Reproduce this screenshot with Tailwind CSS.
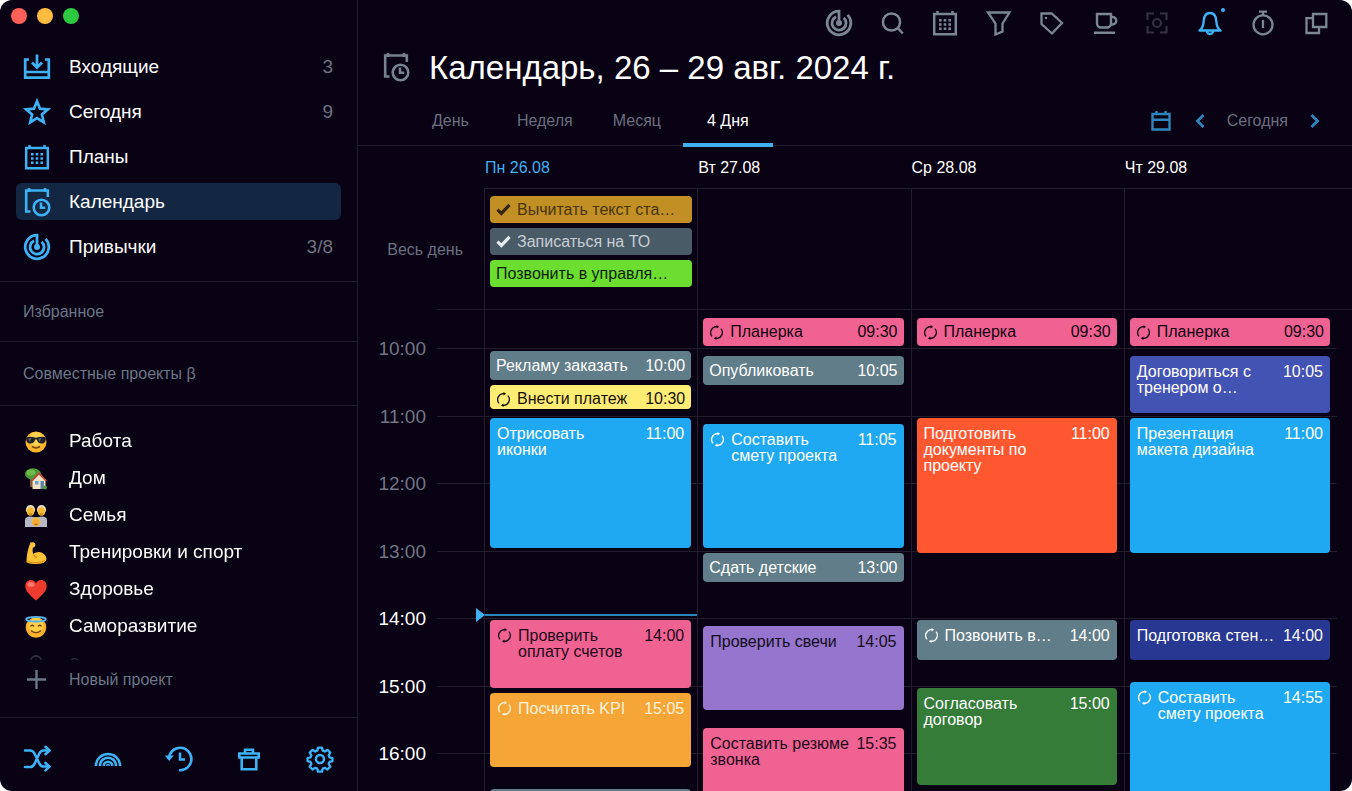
<!DOCTYPE html>
<html lang="ru">
<head>
<meta charset="utf-8">
<meta name="viewport" content="width=device-width, initial-scale=1">
<title>Календарь</title>
<script src="https://cdn.jsdelivr.net/npm/@tailwindcss/browser@4"></script>
</head>
<body class="bg-white font-['Liberation_Sans',Arial,sans-serif]">

<!-- Shared icon shapes -->
<svg class="hidden" aria-hidden="true">
  <symbol id="target" viewBox="0 0 28 28"><g fill="none" stroke="currentColor" stroke-width="2.8"><path d="M14 14V2.200A11.800 11.800 0 1 0 22.600 5.900"/><path d="M11 7.800A7 7 0 1 0 18.600 8.800"/></g><circle cx="14" cy="14" r="3" fill="currentColor"/></symbol>
  <symbol id="plans" viewBox="0 0 28 28"><g fill="none" stroke="currentColor" stroke-width="2.500"><path d="M3.200 5h21.600v20.200H3.200z"/><path d="M6.500 2v4M21.500 2v4"/></g><path fill="currentColor" d="M8 10h2.600v2.600H8zM12.700 10h2.600v2.600h-2.600zM17.400 10H20v2.600h-2.600zM8 14.200h2.600v2.600H8zM12.700 14.200h2.600v2.600h-2.600zM17.400 14.200H20v2.600h-2.600zM8 18.400h2.600V21H8zM12.700 18.400h2.600V21h-2.600zM17.400 18.400H20V21h-2.600z"/></symbol>
  <symbol id="calclock" viewBox="0 0 28 30"><g fill="none" stroke="currentColor" stroke-width="2.600"><path d="M7.500 24.500H3.200V3.500h21.600v6.500"/><path d="M6 1v4M22 1v4"/><circle cx="18.500" cy="20.500" r="7.800"/><path d="M18 15.500v5.300h4.300"/></g></symbol>
  <symbol id="repeat" viewBox="0 0 16 16"><g fill="none" stroke="currentColor" stroke-width="1.400"><path d="M3.300 12.200A6.300 6.300 0 0 1 8.600 1.800"/><path d="M12.700 3.800A6.300 6.300 0 0 1 7.400 14.200"/></g><path fill="currentColor" d="M8 0l2.800 1.900L8 3.800zM8 12.200l-2.800 1.900L8 16z"/></symbol>
  <symbol id="check" viewBox="0 0 16 14"><path fill="none" stroke="currentColor" stroke-width="3.400" d="M1.500 7.200l4.200 4L14.500 2"/></symbol>
</svg>

<div class="flex h-screen w-full overflow-hidden rounded-[12px] bg-[#090114] text-white">

  <!-- Sidebar -->
  <aside class="flex w-[358px] shrink-0 flex-col border-r border-[#221c2d]">
    <div class="flex h-[48px] shrink-0 items-start gap-[10px] pt-2 pl-[11px]">
      <button aria-label="Закрыть" class="size-4 rounded-full bg-[#fe5f57]"></button>
      <button aria-label="Свернуть" class="size-4 rounded-full bg-[#febb40]"></button>
      <button aria-label="Развернуть" class="size-4 rounded-full bg-[#2bc840]"></button>
    </div>

    <nav class="mx-4 flex shrink-0 flex-col gap-2 pb-4 text-[19px] [&_span]:pt-[2px]">
      <a href="#" class="flex h-[37px] items-center rounded-md px-[7px]">
        <svg class="mr-[18px] size-7 text-[#3db2f5]" viewBox="0 0 28 28" fill="none" stroke="currentColor" stroke-width="2.700"><path d="M6 6.500H2.200v18.200h23.600V6.500H22M2.200 19h23.600M14 1.500V14M9 9.500l5 5 5-5"/></svg>
        <span class="flex-1">Входящие</span><span class="pr-px text-[#6f7280]">3</span>
      </a>
      <a href="#" class="flex h-[37px] items-center rounded-md px-[7px]">
        <svg class="mr-[18px] size-7 text-[#3db2f5]" viewBox="0 0 28 28" fill="none" stroke="currentColor" stroke-width="2.700"><path d="M14 3.300l3 7.400 8 .6-6.100 5.200 1.900 7.800-6.800-4.200-6.800 4.200 1.900-7.800L3 11.300l8-.6z"/></svg>
        <span class="flex-1">Сегодня</span><span class="pr-px text-[#6f7280]">9</span>
      </a>
      <a href="#" class="flex h-[37px] items-center rounded-md px-[7px]">
        <svg class="mr-[18px] size-7 text-[#3db2f5]"><use href="#plans"/></svg>
        <span class="flex-1">Планы</span>
      </a>
      <a href="#" aria-current="page" class="flex h-[37px] items-center rounded-md bg-[#132642] px-[7px]">
        <svg class="mr-[18px] h-[30px] w-7 text-[#3db2f5]"><use href="#calclock"/></svg>
        <span class="flex-1">Календарь</span>
      </a>
      <a href="#" class="flex h-[37px] items-center rounded-md px-[7px]">
        <svg class="mr-[18px] size-7 text-[#3db2f5]"><use href="#target"/></svg>
        <span class="flex-1">Привычки</span><span class="pr-px text-[#6f7280]">3/8</span>
      </a>
    </nav>

    <h2 class="flex h-[60px] shrink-0 items-center border-t border-[#221c2d] pl-[23px] text-base text-[#6b7786]">Избранное</h2>
    <h2 class="flex h-[65px] shrink-0 items-center border-y border-[#221c2d] pl-[23px] text-base text-[#6b7786]">Совместные проекты β</h2>

    <div class="min-h-0 flex-1 overflow-hidden pt-[17px] text-[19px] [mask-image:linear-gradient(to_top,#0005,#000_20px)]">
      <a href="#" class="flex h-[37px] items-center pl-[25px]">
        <svg class="mr-[22px] size-[22px]" viewBox="0 0 22 22"><circle cx="11" cy="11" r="10.500" fill="#fcb72b"/><circle cx="11" cy="8" r="7" fill="#ffd34d"/><path d="M1 6.500c3-1 6-.8 10 .2 4-1 7-1.200 10-.2-.1 4-1.400 6-4.400 6-2.800 0-4.200-1.600-4.800-4h-1.600c-.6 2.400-2 4-4.800 4-3 0-4.300-2-4.400-6z" fill="#20222a"/><path d="M3.500 7.500l3-.5-2 4zM13.500 7.500l3-.5-2 4z" fill="#5f6670"/><path d="M7 15.300c2.500 2 5.500 2 8 0" fill="none" stroke="#70401a" stroke-width="1.500"/></svg>
        Работа</a>
      <a href="#" class="flex h-[37px] items-center pl-[25px]">
        <svg class="mr-[22px] size-[22px]" viewBox="0 0 22 22"><path d="M5 10h3v9H5z" fill="#8b5a34"/><ellipse cx="8" cy="6" rx="8" ry="5.800" fill="#4c9a35"/><ellipse cx="6" cy="4.500" rx="4.500" ry="3" fill="#6fb84a"/><path d="M7.500 11.500l6.500-7 6.500 7V21h-13z" fill="#f3e2c4"/><path d="M6 12.500l8-8.500 8 8.500-1.500.8L14 6.800l-6.500 6.500z" fill="#b8483c"/><path d="M10 13h3.500v3.500H10z" fill="#66a7d8"/><path d="M15.500 13H19v8h-3.500z" fill="#5b86b0"/><circle cx="20" cy="19.500" r="2" fill="#4c9a35"/></svg>
        Дом</a>
      <a href="#" class="flex h-[37px] items-center pl-[25px]">
        <svg class="mr-[22px] size-[22px]" viewBox="0 0 22 22"><path d="M0 22v-7c0-2 2-3.500 5-3.500s5.500 1 6 3c.5-2 3-3 6-3s5 1.500 5 3.500v7z" fill="#b5b8c4"/><ellipse cx="5.500" cy="4.700" rx="4.600" ry="4.700" fill="#e6dcc8"/><ellipse cx="16.500" cy="4.700" rx="4.600" ry="4.700" fill="#e6dcc8"/><ellipse cx="5.500" cy="6.500" rx="3.600" ry="4.300" fill="#f9b92e"/><ellipse cx="16.500" cy="6.500" rx="3.600" ry="4.300" fill="#f9b92e"/><path d="M4 9h3M15 9h3" stroke="#9a5b18" stroke-width=".8"/><circle cx="11" cy="16.500" r="4.600" fill="#e6c060"/><ellipse cx="11" cy="17.600" rx="3.600" ry="3.800" fill="#f9a92e"/><path d="M9.500 19.500h3" stroke="#8a4b10" stroke-width=".8"/></svg>
        Семья</a>
      <a href="#" class="flex h-[37px] items-center pl-[25px]">
        <svg class="mr-[22px] size-[22px]" viewBox="0 0 22 22"><path d="M5.500.5C7.500-.3 10 .3 10.300 2c.3 1.800-.6 3.200-2.300 3.700-.6 2-.6 4 .3 6.300 2.700-2 6.500-2.600 9.200-1 3.300 1.900 4.700 5.300 3.500 7.700-1.800 3-8 3.500-12 3.200-4-.2-7-.9-7.600-1.900C1.500 14 3 6 5.500.5z" fill="#fcc436"/><path d="M8.500 12.500c.8 1.800 2 2.800 3.600 3M2 19c5 2.500 14 2 18.500-.5" fill="none" stroke="#e08a16" stroke-width="1.300"/></svg>
        Тренировки и спорт</a>
      <a href="#" class="flex h-[37px] items-center pl-[25px]">
        <svg class="mr-[22px] size-[22px]" viewBox="0 0 22 22"><path d="M11 21.500C5 16.500.3 12 .3 7 .3 3.500 2.800 1 5.800 1 8 1 10 2.200 11 4.200 12 2.200 14 1 16.200 1c3 0 5.500 2.500 5.500 6 0 5-4.700 9.500-10.700 14.500z" fill="#ee3b2f"/><ellipse cx="6" cy="5.500" rx="3.500" ry="2.500" fill="#f9776c"/></svg>
        Здоровье</a>
      <a href="#" class="flex h-[37px] items-center pl-[25px]">
        <svg class="mr-[22px] size-[22px]" viewBox="0 0 22 22"><circle cx="11" cy="11.500" r="10.300" fill="#fcb32b"/><circle cx="11" cy="9.500" r="7.500" fill="#ffcf47"/><ellipse cx="11" cy="3.200" rx="9.800" ry="2.300" fill="none" stroke="#55b4ee" stroke-width="1.800"/><path d="M5.500 10.500c.8-1.600 2.600-1.600 3.400 0M13.100 10.500c.8-1.600 2.600-1.600 3.400 0M6 14.500c3 2.800 7 2.800 10 0" fill="none" stroke="#70401a" stroke-width="1.400"/></svg>
        Саморазвитие</a>
      <a href="#" class="flex h-[41px] items-center pl-[25px] text-[#6a6670]">
        <svg class="mr-[22px] size-[22px]" viewBox="0 0 22 22" fill="none" stroke="#6a6670" stroke-width="1.800"><path d="M5.500 12V6.500a5.500 5.500 0 0 1 11 0V12"/><circle cx="11" cy="7" r="1.500"/></svg>
        З</a>
    </div>

    <button class="flex h-[57px] shrink-0 items-start pt-[10px] pl-[27px] text-left text-base leading-5 text-[#6b7786]">
      <svg class="mr-[23px] size-[19px]" viewBox="0 0 19 19" fill="none" stroke="currentColor" stroke-width="2.400"><path d="M9.500 0v19M0 9.500h19"/></svg>
      Новый проект</button>

    <div class="flex h-[74px] shrink-0 items-center justify-between border-t border-[#221c2d] pt-[9px] pr-[23px] pb-[1px] pl-[23px] text-[#3db2f5]">
      <button aria-label="Перемешать"><svg class="size-7" viewBox="0 0 28 28" fill="none" stroke="currentColor" stroke-width="2.600" stroke-linecap="round"><path d="M2 5.500h5.500c2 0 3 1.300 4 3l4.800 10c1 1.700 2 3 4 3H25M2 22h5.500c2 0 3-1.300 4-3l4.800-10.500c1-1.700 2-3 4-3H25"/><path d="M22.500 1.800l4 3.700-4 3.700M22.500 18l4 3.700-4 3.700"/></svg></button>
      <button aria-label="Радуга"><svg class="size-7" viewBox="0 0 28 28" fill="none" stroke="currentColor" stroke-width="2.600"><path d="M2 21v-.5a12 11.500 0 0 1 24 0v.5M6 21v-.5a8 7.700 0 0 1 16 0v.5M9.800 21v-.3a4.200 4 0 0 1 8.400 0v.3"/><path d="M12.800 21a1.200 1.500 0 0 1 2.400 0" stroke-width="1.500"/></svg></button>
      <button aria-label="История"><svg class="size-7" viewBox="0 0 28 28" fill="none" stroke="currentColor" stroke-width="2.600"><path d="M4 13.500A11.200 11.200 0 1 1 15 25.200" stroke-linecap="round"/><path d="M15 7.500v7h5"/><path d="M-.2 10.500h9L4.200 16z" fill="currentColor" stroke="none"/></svg></button>
      <button aria-label="Корзина"><svg class="size-7" viewBox="0 0 28 28" fill="none" stroke="currentColor" stroke-width="2.600"><path d="M4.300 8.500h19.400v4H4.300zM6.700 12.500v11.800h14.600V12.500M10 8.500V4.800h8v3.700"/></svg></button>
      <button aria-label="Настройки"><svg class="size-7" viewBox="0 0 28 28" fill="none" stroke="currentColor" stroke-width="2.500" stroke-linejoin="round"><path d="M11.900 1.900h4.200l.8 3.200 2.200.9 2.800-1.700 3 3-1.700 2.800.9 2.200 3.100.8v3.200l-3.100.8-.9 2.200 1.700 2.800-3 3-2.800-1.700-2.200.9-.8 3.100h-4.200l-.8-3.100-2.200-.9-2.800 1.700-3-3 1.700-2.800-.9-2.200-3.100-.8v-3.200l3.100-.8.9-2.200-1.700-2.800 3-3L8.900 6l2.200-.9z" transform="translate(.8 .8) scale(.943)"/><circle cx="14" cy="14" r="4"/></svg></button>
    </div>
  </aside>

  <!-- Main area -->
  <main class="flex min-w-0 flex-1 flex-col">
    <div class="flex h-[46px] shrink-0 items-center justify-end gap-[25px] pr-[22px] text-[#7b8794]">
      <button aria-label="Привычки"><svg class="size-7"><use href="#target"/></svg></button>
      <button aria-label="Поиск"><svg class="size-7" viewBox="0 0 28 28" fill="none" stroke="currentColor" stroke-width="2.500"><circle cx="13.500" cy="13" r="8.600"/><path d="M19.800 19.200l5 5.300"/></svg></button>
      <button aria-label="Планы"><svg class="size-7"><use href="#plans"/></svg></button>
      <button aria-label="Фильтр"><svg class="size-7" viewBox="0 0 28 28" fill="none" stroke="currentColor" stroke-width="2.300"><path d="M4 3.500h21.500l-7 11v8l-7 3v-11z"/></svg></button>
      <button aria-label="Метки"><svg class="size-7" viewBox="0 0 28 28" fill="none" stroke="currentColor" stroke-width="2.300"><path d="M4.500 4.500h10.200L25 14 15 24.500 4.500 15z"/><circle cx="9" cy="9" r="1.300" fill="currentColor" stroke="none"/></svg></button>
      <button aria-label="Перерыв"><svg class="size-7" viewBox="0 0 28 28" fill="none" stroke="currentColor" stroke-width="2.400"><path d="M7 5h14v9.500a4 4 0 0 1-4 4h-6a4 4 0 0 1-4-4zM21 8h1.500a2.500 2.500 0 0 1 0 7.500H21M4 23.700h21"/></svg></button>
      <button aria-label="Фокус" class="text-[#34303e]"><svg class="size-7" viewBox="0 0 28 28" fill="none" stroke="currentColor" stroke-width="2.200"><path d="M4.500 11V4.500H11M17 4.500h6.500V11M23.500 17v6.500H17M11 23.500H4.500V17"/><circle cx="14" cy="14" r="4"/></svg></button>
      <button aria-label="Уведомления" class="relative text-[#3db2f5]"><svg class="size-7" viewBox="0 0 28 28" fill="none" stroke="currentColor" stroke-width="2.400" stroke-linejoin="round"><path d="M3.500 21.500c3.200-2 3.900-5 4.200-9.500C8 7 10.200 4 14 4s6 3 6.300 8c.3 4.500 1 7.500 4.200 9.500z"/><path d="M11 22c.3 4 5.700 4 6 0"/></svg><span class="absolute -top-px -right-px size-1 rounded-full bg-[#3db2f5]"></span></button>
      <button aria-label="Таймер"><svg class="size-7" viewBox="0 0 28 28" fill="none" stroke="currentColor" stroke-width="2.300"><circle cx="14" cy="15.800" r="9.500"/><path d="M10 2.700h8M14 2.700v4M14 11v8"/></svg></button>
      <button aria-label="Окна"><svg class="size-7" viewBox="0 0 28 28" fill="none" stroke="currentColor" stroke-width="2.300"><path d="M11 5h13.300v13H11z"/><path d="M11 9.200H4.500V24H17v-6"/></svg></button>
    </div>

    <div class="flex h-[42px] shrink-0 items-center gap-[19px] pl-6">
      <svg class="h-[30px] w-7 text-[#76828f]"><use href="#calclock"/></svg>
      <h1 class="text-[33px] leading-none whitespace-nowrap">Календарь, 26 – 29 авг. 2024 г.</h1>
    </div>

    <div class="flex h-[58px] shrink-0 items-stretch border-b border-[#221c2d] pr-[32px] pl-[50px] text-base text-[#6b7080]">
      <button class="px-6 pt-2">День</button>
      <button class="pt-2 pr-5 pl-6">Неделя</button>
      <button class="px-5 pt-2">Месяц</button>
      <button aria-pressed="true" class="relative ml-[2px] px-6 pt-2 text-white after:absolute after:inset-x-0 after:-bottom-[2px] after:h-1 after:bg-[#3db2f5]">4 Дня</button>
      <div class="ml-auto flex items-center pt-2">
        <button aria-label="Выбрать дату" class="text-[#2f86bd]"><svg class="size-5" viewBox="0 0 20 20" fill="none" stroke="currentColor" stroke-width="2.400"><path d="M1.500 3h17v15.500h-17zM1.500 8.700h17M5.500 0v3M14.500 0v3"/></svg></button>
        <button aria-label="Назад" class="ml-6 text-[#2f86bd]"><svg class="h-[14px] w-[10px]" viewBox="0 0 10 14" fill="none" stroke="currentColor" stroke-width="2.800"><path d="M8.500 1L2.500 7l6 6"/></svg></button>
        <button class="mx-[22px]">Сегодня</button>
        <button aria-label="Вперёд" class="text-[#2f86bd]"><svg class="h-[14px] w-[10px]" viewBox="0 0 10 14" fill="none" stroke="currentColor" stroke-width="2.800"><path d="M1.500 1l6 6-6 6"/></svg></button>
      </div>
    </div>

    <!-- Day names -->
    <div class="grid h-[42px] shrink-0 grid-cols-4 items-center pt-[2px] pr-[14px] pl-[127px] text-base whitespace-nowrap">
      <div class="text-[#3db2f5]">Пн 26.08</div>
      <div>Вт 27.08</div>
      <div>Ср 28.08</div>
      <div>Чт 29.08</div>
    </div>

    <!-- All-day tasks -->
    <div class="flex h-[121px] shrink-0">
      <div class="flex w-[126px] shrink-0 items-center justify-end pt-[2px] pr-[21px] text-base text-[#6b7080]">Весь день</div>
      <div class="grid flex-1 grid-cols-4 border-t border-[#221c2d] pr-[15px]">
        <div class="flex min-w-0 flex-col gap-[5px] border-l border-[#221c2d] pt-[7px] pr-[5px] pl-[5px] text-base">
          <button class="flex h-[27px] items-center rounded bg-[#c18f24] px-[6px] whitespace-nowrap text-[#4a340c]"><svg class="mr-[6px] h-[13px] w-[15px] text-[#33240a]"><use href="#check"/></svg>Вычитать текст ста…</button>
          <button class="flex h-[27px] items-center rounded bg-[#4a5b68] px-[6px] whitespace-nowrap text-[#c6ced6]"><svg class="mr-[6px] h-[13px] w-[15px] text-[#e4eaf0]"><use href="#check"/></svg>Записаться на ТО</button>
          <button class="flex h-[27px] items-center rounded bg-[#6bde2f] px-[6px] whitespace-nowrap text-[#0d1c0a]">Позвонить в управля…</button>
        </div>
        <div class="border-l border-[#221c2d]"></div>
        <div class="border-l border-[#221c2d]"></div>
        <div class="border-l border-[#221c2d]"></div>
      </div>
    </div>

    <!-- Hours and timed tasks share one grid cell -->
    <div class="grid min-h-0 flex-1 grid-cols-1 grid-rows-1 overflow-hidden">
      <div class="col-start-1 row-start-1 min-h-0 overflow-hidden text-[19px] text-[#717684]">
        <div class="ml-[79px] h-px bg-[#221c2d]"></div>
        <div class="flex flex-col pt-[5px] pr-[15px] [&_span]:first:pt-[2px]">
          <div class="flex h-[67px] items-center gap-[11px]"><span class="w-[68px] pt-[2px] text-right">10:00</span><span class="h-px flex-1 bg-[#221c2d]"></span></div>
          <div class="flex h-[68px] items-center gap-[11px]"><span class="w-[68px] pt-[2px] text-right">11:00</span><span class="h-px flex-1 bg-[#221c2d]"></span></div>
          <div class="flex h-[67px] items-center gap-[11px]"><span class="w-[68px] pt-[2px] text-right">12:00</span><span class="h-px flex-1 bg-[#221c2d]"></span></div>
          <div class="flex h-[68px] items-center gap-[11px]"><span class="w-[68px] pt-[2px] text-right">13:00</span><span class="h-px flex-1 bg-[#221c2d]"></span></div>
          <div class="flex h-[67px] items-center gap-[11px]"><span class="w-[68px] pt-[2px] text-right text-white">14:00</span><span class="h-px flex-1 bg-[#221c2d]"></span></div>
          <div class="flex h-[68px] items-center gap-[11px]"><span class="w-[68px] pt-[2px] text-right text-white">15:00</span><span class="h-px flex-1 bg-[#221c2d]"></span></div>
          <div class="flex h-[67px] items-center gap-[11px]"><span class="w-[68px] pt-[2px] text-right text-white">16:00</span><span class="h-px flex-1 bg-[#221c2d]"></span></div>
        </div>
      </div>

      <div class="col-start-1 row-start-1 grid min-h-0 grid-cols-4 overflow-hidden pr-[15px] pl-[126px] text-base leading-4">
        <!-- Monday -->
        <div class="relative flex min-w-0 flex-col border-l border-[#221c2d] pt-[42px] pr-[6px] pl-[5px]">
          <div class="absolute top-[299px] right-0 -left-[9px] flex items-center">
            <span class="h-[14px] w-[9px] bg-[#3db2f5] [clip-path:polygon(0_0,100%_50%,0_100%)]"></span>
            <span class="h-[2px] flex-1 bg-[#2a86bd]"></span>
          </div>
          <button class="flex h-[29px] shrink-0 items-center justify-between rounded bg-[#607d89] px-[6px] whitespace-nowrap"><span>Рекламу заказать</span><span>10:00</span></button>
          <button class="mt-[5px] flex h-[24px] shrink-0 items-center rounded bg-[#ffec72] px-[6px] pt-[4px] whitespace-nowrap text-[#15120a]"><svg class="mr-[6px] size-[15px]"><use href="#repeat"/></svg><span class="flex-1 text-left">Внести платеж</span><span>10:30</span></button>
          <button class="mt-[9px] flex h-[130px] shrink-0 items-start justify-between rounded bg-[#20a9f3] px-[7px] pt-[8px] text-left"><span>Отрисовать<br>иконки</span><span>11:00</span></button>
          <button class="mt-[72px] flex h-[68px] shrink-0 items-start rounded bg-[#f06292] px-[7px] pt-[8px] text-left text-[#1c0a18]"><svg class="mr-[6px] size-[15px]"><use href="#repeat"/></svg><span class="flex-1 whitespace-nowrap">Проверить<br>оплату счетов</span><span>14:00</span></button>
          <button class="mt-[5px] flex h-[74px] shrink-0 items-start rounded bg-[#f6a636] px-[7px] pt-[8px] text-left text-[#fff1dc]"><svg class="mr-[6px] size-[15px]"><use href="#repeat"/></svg><span class="flex-1 whitespace-nowrap">Посчитать KPI</span><span>15:05</span></button>
          <div class="mt-[22px] h-[29px] shrink-0 rounded bg-[#607d89]"></div>
        </div>
        <!-- Tuesday -->
        <div class="flex min-w-0 flex-col border-l border-[#221c2d] pt-[9px] pr-[7px] pl-[5px]">
          <button class="flex h-[28px] shrink-0 items-center rounded bg-[#f06292] px-[6px] whitespace-nowrap text-[#12020f]"><svg class="mr-[6px] size-[15px]"><use href="#repeat"/></svg><span class="flex-1 text-left">Планерка</span><span>09:30</span></button>
          <button class="mt-[10px] flex h-[29px] shrink-0 items-center justify-between rounded bg-[#607d89] px-[6px] whitespace-nowrap"><span>Опубликовать</span><span>10:05</span></button>
          <button class="mt-[39px] flex h-[124px] shrink-0 items-start rounded bg-[#20a9f3] px-[7px] pt-[8px] text-left"><svg class="mr-[6px] size-[15px]"><use href="#repeat"/></svg><span class="flex-1 whitespace-nowrap">Составить<br>смету проекта</span><span>11:05</span></button>
          <button class="mt-[5px] flex h-[29px] shrink-0 items-center justify-between rounded bg-[#607d89] px-[6px] whitespace-nowrap"><span>Сдать детские</span><span>13:00</span></button>
          <button class="mt-[44px] flex h-[84px] shrink-0 items-start justify-between rounded bg-[#9575cd] px-[7px] pt-[8px] text-left whitespace-nowrap text-[#150c20]"><span>Проверить свечи</span><span>14:05</span></button>
          <button class="mt-[18px] flex h-[130px] shrink-0 items-start justify-between rounded bg-[#f06292] px-[7px] pt-[8px] text-left whitespace-nowrap text-[#1c0a18]"><span>Составить резюме<br>звонка</span><span>15:35</span></button>
        </div>
        <!-- Wednesday -->
        <div class="flex min-w-0 flex-col border-l border-[#221c2d] pt-[9px] pr-[7px] pl-[5px]">
          <button class="flex h-[28px] shrink-0 items-center rounded bg-[#f06292] px-[6px] whitespace-nowrap text-[#12020f]"><svg class="mr-[6px] size-[15px]"><use href="#repeat"/></svg><span class="flex-1 text-left">Планерка</span><span>09:30</span></button>
          <button class="mt-[72px] flex h-[135px] shrink-0 items-start justify-between rounded bg-[#ff5830] px-[7px] pt-[8px] text-left whitespace-nowrap"><span>Подготовить<br>документы по<br>проекту</span><span>11:00</span></button>
          <button class="mt-[67px] flex h-[40px] shrink-0 items-start rounded bg-[#607d89] px-[7px] pt-[8px] text-left whitespace-nowrap"><svg class="mr-[6px] size-[15px]"><use href="#repeat"/></svg><span class="flex-1">Позвонить в…</span><span>14:00</span></button>
          <button class="mt-[28px] flex h-[97px] shrink-0 items-start justify-between rounded bg-[#357c38] px-[7px] pt-[8px] text-left"><span>Согласовать<br>договор</span><span>15:00</span></button>
        </div>
        <!-- Thursday -->
        <div class="flex min-w-0 flex-col border-l border-[#221c2d] pt-[9px] pr-[7px] pl-[5px]">
          <button class="flex h-[28px] shrink-0 items-center rounded bg-[#f06292] px-[6px] whitespace-nowrap text-[#12020f]"><svg class="mr-[6px] size-[15px]"><use href="#repeat"/></svg><span class="flex-1 text-left">Планерка</span><span>09:30</span></button>
          <button class="mt-[10px] flex h-[57px] shrink-0 items-start justify-between rounded bg-[#4353b3] px-[7px] pt-[8px] text-left whitespace-nowrap"><span>Договориться с<br>тренером о…</span><span>10:05</span></button>
          <button class="mt-[5px] flex h-[135px] shrink-0 items-start justify-between rounded bg-[#20a9f3] px-[7px] pt-[8px] text-left whitespace-nowrap"><span>Презентация<br>макета дизайна</span><span>11:00</span></button>
          <button class="mt-[67px] flex h-[40px] shrink-0 items-start justify-between rounded bg-[#283892] px-[7px] pt-[8px] text-left whitespace-nowrap"><span>Подготовка стен…</span><span>14:00</span></button>
          <button class="mt-[22px] flex h-[130px] shrink-0 items-start rounded bg-[#20a9f3] px-[7px] pt-[8px] text-left whitespace-nowrap"><svg class="mr-[6px] size-[15px]"><use href="#repeat"/></svg><span class="flex-1">Составить<br>смету проекта</span><span>14:55</span></button>
        </div>
      </div>
    </div>
  </main>
</div>
</body>
</html>
